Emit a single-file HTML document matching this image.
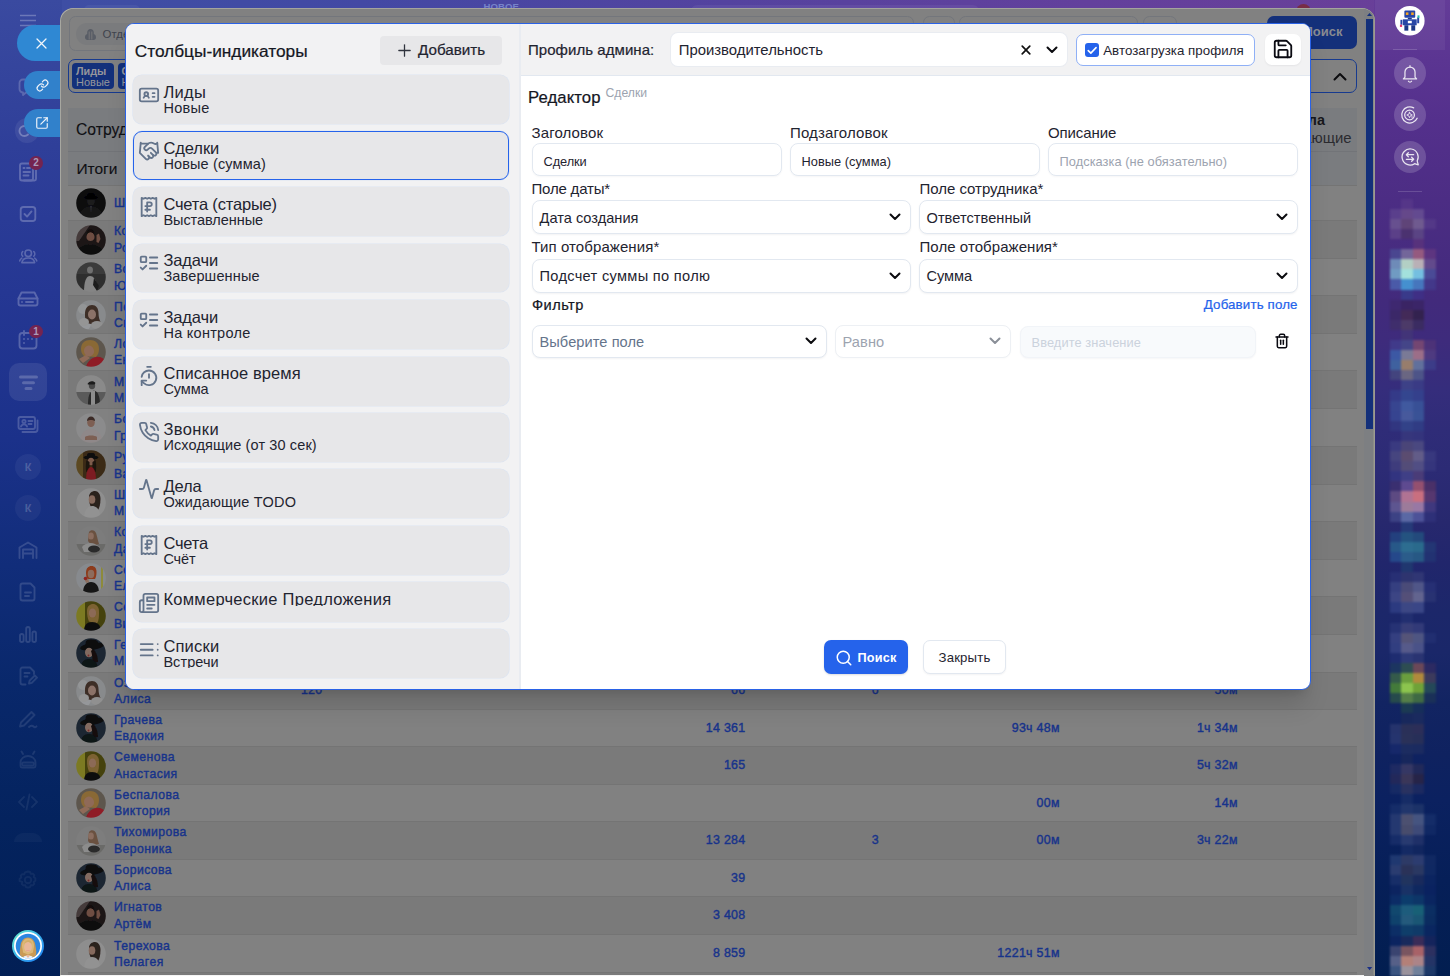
<!DOCTYPE html>
<html lang="ru">
<head>
<meta charset="utf-8">
<title>Столбцы-индикаторы</title>
<style>
*{box-sizing:border-box;margin:0;padding:0}
html,body{width:1450px;height:976px;overflow:hidden}
body{position:relative;font-family:"Liberation Sans",sans-serif;color:#111827;background:#1d3590}
.abs{position:absolute}
svg{display:block;overflow:visible}
/* ---------- page background ---------- */
#bg{left:0;top:0;width:1450px;height:976px;background:linear-gradient(90deg,#3d4fa4 0%,#4349a4 25%,#54439f 50%,#63409c 75%,#6a3f98 100%)}
#lbar{left:0;top:0;width:62px;height:976px;background:linear-gradient(180deg,#3a4aa0 0%,#2f3f99 15%,#253793 30%,#1b318a 45%,#112d7a 58%,#09286b 70%,#04235e 84%,#021f55 100%)}
#rbar{left:1374px;top:0;width:76px;height:976px;background:linear-gradient(180deg,#643c98 0px,#5b3592 60px,#54308c 120px,#4c2d84 200px,#422a7c 300px,#3e2b7c 340px,#352d7c 390px,#2f2c78 430px,#2c2b75 470px,#27286e 522px,#21266c 562px,#1c276a 612px,#1a2769 653px,#122462 703px,#0f2260 754px,#0b2160 800px,#061f58 880px,#021e50 976px)}
/* ---------- left sidebar ---------- */
.lic{position:absolute;left:16px;width:24px;height:24px;color:#fff}
.lic svg{width:24px;height:24px;fill:none;stroke:currentColor;stroke-width:1.7;stroke-linecap:round;stroke-linejoin:round}
.badge{position:absolute;width:13.600px;height:13.600px;border-radius:7px;background:#742450;color:#ab9bba;font-size:10px;line-height:14px;text-align:center;font-weight:700}
.pill{position:absolute;background:#2f88d3;color:#fff}
/* ---------- slider ---------- */
#slider{left:60px;top:8px;width:1314.8px;height:968px;border-radius:13px 13px 0 0;background:#818181;overflow:hidden}
/* ---------- modal ---------- */
#modal{left:125px;top:23px;width:1186px;height:667px;border:1px solid #2a62e6;border-radius:9px;background:#fff;overflow:hidden;box-shadow:0 20px 25px -5px rgba(0,0,0,.13),0 8px 10px -6px rgba(0,0,0,.12)}
#lp{left:0;top:0;width:395px;height:665px;background:#f2f2f3;border-right:2px solid #e9ecf1}
#hd{left:395px;top:0;width:789px;height:52px;background:#f2f2f3;border-bottom:1px solid #e2e8f0}
.med{-webkit-text-stroke:.22px currentColor}
.it{position:absolute;left:6.6px;width:376.8px;height:48.8px;border-radius:9px;background:#e7e7e9;box-shadow:0 0 0 .6px rgba(214,224,240,.8)}
.it.sel{border:1px solid #2563eb}
.it.sel .ic{left:4px;top:8.200px}.it.sel .t{left:29.8px;top:7.5px}.it.sel .s{left:29.8px;top:24.7px}
.it .ic{position:absolute;left:5px;top:8.400px;width:22px;height:22px;color:#64748b}
.it .ic svg{width:22px;height:22px;fill:none;stroke:currentColor;stroke-width:2;stroke-linecap:round;stroke-linejoin:round}
.it .t{position:absolute;left:30.8px;top:8.5px;font-size:16.5px;line-height:17px;color:#1f2430;white-space:nowrap}
.it .s{position:absolute;left:30.8px;top:25.7px;font-size:14.5px;line-height:15px;color:#1f2430;white-space:nowrap}
.lbl{position:absolute;font-size:15px;line-height:16px;color:#1f2430;white-space:nowrap}
.inp{position:absolute;height:33.5px;border:1px solid #e2e8f0;border-radius:8px;background:#fff;box-shadow:0 1px 2px rgba(15,23,42,.05);font-size:12.8px;line-height:31px;padding-left:11px;color:#1f2430;white-space:nowrap}
.sel2{position:absolute;height:34.5px;border:1px solid #e2e8f0;border-radius:8px;background:#fff;box-shadow:0 1px 2px rgba(15,23,42,.05);font-size:14.6px;line-height:32px;padding-left:7.5px;color:#1f2430;white-space:nowrap}
.chev{position:absolute;width:12px;height:8px}
.chev svg{width:12px;height:8px;fill:none;stroke:#0b0b0f;stroke-width:2;stroke-linecap:round;stroke-linejoin:round}
</style>
</head>
<body>
<div id="bg" class="abs"></div>
<div id="lbar" class="abs"></div>
<div id="rbar" class="abs"></div>

<!--LEFTBAR-->
<svg class="abs" style="left:20px;top:13px;width:17px;height:14px;opacity:.26" viewBox="0 0 17 14" stroke="#fff" stroke-width="1.4" fill="none"><path d="M0 2.5h16M0 7.5h16M0 12.5h16"/></svg>
<svg class="abs" style="left:16.3px;top:74.0px;width:24px;height:24px;opacity:0.2" viewBox="0 0 24 24" fill="none" stroke="#fff" stroke-width="1.85" stroke-linecap="round" stroke-linejoin="round"><path d="M9 5.500H7a3.500 3.500 0 0 0-3.500 3.500v6A3.500 3.500 0 0 0 7 18.500v2.500l3-2.500h9"/></svg>
<div class="abs" style="left:14.500px;top:118px;width:24.600px;height:24.600px;border-radius:13px;background:rgba(255,255,255,.07)"></div>
<svg class="abs" style="left:13.0px;top:118.5px;width:24px;height:24px;opacity:0.28" viewBox="0 0 24 24" fill="none" stroke="#fff" stroke-width="1.85" stroke-linecap="round" stroke-linejoin="round"><path d="M15 8.500a5 5 0 1 0 0 7"/></svg>
<svg class="abs" style="left:16.3px;top:160.0px;width:24px;height:24px;opacity:0.24" viewBox="0 0 24 24" fill="none" stroke="#fff" stroke-width="1.85" stroke-linecap="round" stroke-linejoin="round"><rect x="4" y="3.5" width="13" height="17" rx="2"/><path d="M17 8h1.5a1.5 1.5 0 0 1 1.5 1.5V19a1.5 1.5 0 0 1-1.5 1.5H8"/><path d="M7.5 8h1M11 8h3M7.5 12h6.5M7.5 15.5h5"/></svg>
<svg class="abs" style="left:16.3px;top:202.0px;width:24px;height:24px;opacity:0.24" viewBox="0 0 24 24" fill="none" stroke="#fff" stroke-width="1.85" stroke-linecap="round" stroke-linejoin="round"><rect x="4.700" y="5" width="14.600" height="14" rx="2.800"/><path d="M8.500 12l2.600 2.600 4.400-5.200"/></svg>
<svg class="abs" style="left:18.1px;top:246.1px;width:20.5px;height:20.5px;opacity:0.24" viewBox="0 0 24 24" fill="none" stroke="#fff" stroke-width="1.85" stroke-linecap="round" stroke-linejoin="round"><circle cx="12" cy="8.5" r="3.8"/><path d="M4.5 19.5c.6-3.6 3.6-5.5 7.5-5.500s6.900 1.900 7.500 5.500z"/><path d="M5.500 6.500c-1.500 1.500-1.500 4 0 5.500M18.500 6.500c1.500 1.500 1.500 4 0 5.500"/><path d="M2 17.500c.300-1.500 1.200-2.600 2.500-3.300M22 17.500c-.300-1.500-1.200-2.600-2.500-3.300"/></svg>
<svg class="abs" style="left:16.3px;top:286.0px;width:24px;height:24px;opacity:0.24" viewBox="0 0 24 24" fill="none" stroke="#fff" stroke-width="1.85" stroke-linecap="round" stroke-linejoin="round"><path d="M5.500 6.500h13l3 6v5a2 2 0 0 1-2 2h-15a2 2 0 0 1-2-2v-5z"/><path d="M2.500 12.500h19"/><path d="M6 16h.01M10 16h7"/></svg>
<svg class="abs" style="left:16.3px;top:327.5px;width:24px;height:24px;opacity:0.24" viewBox="0 0 24 24" fill="none" stroke="#fff" stroke-width="1.85" stroke-linecap="round" stroke-linejoin="round"><rect x="3.500" y="5" width="17" height="15.500" rx="3"/><path d="M8 3v4M16 3v4"/><path d="M8 11h.01M12 11h.01M16 11h.01M8 15h.01"/></svg>
<div class="abs" style="left:9px;top:363px;width:38px;height:38px;border-radius:10px;background:rgba(255,255,255,.085)"></div>
<svg class="abs" style="left:18px;top:374px;width:21px;height:18px;opacity:.2" viewBox="0 0 21 18" stroke="#fff" stroke-width="3" stroke-linecap="round" fill="none"><path d="M2.500 3h16M5.500 8.700h10M8 14.400h5"/></svg>
<svg class="abs" style="left:16.3px;top:412.0px;width:24px;height:24px;opacity:0.2" viewBox="0 0 24 24" fill="none" stroke="#fff" stroke-width="1.85" stroke-linecap="round" stroke-linejoin="round"><rect x="2.500" y="5" width="16.500" height="12" rx="2"/><path d="M21.500 8.500v9a2.500 2.500 0 0 1-2.500 2.500H6.500"/><circle cx="8" cy="9.500" r="1.600"/><path d="M5 14.500c.500-1.500 1.700-2.200 3-2.200s2.500.700 3 2.200M12.500 9h4M12.500 12h3"/></svg>
<div class="abs" style="left:15px;top:453.5px;width:26px;height:26px;border-radius:13px;background:rgba(255,255,255,0.05);color:rgba(255,255,255,.2);font-size:11px;font-weight:700;line-height:26px;text-align:center">К</div>
<div class="abs" style="left:15px;top:495px;width:26px;height:26px;border-radius:13px;background:rgba(255,255,255,0.045);color:rgba(255,255,255,.2);font-size:11px;font-weight:700;line-height:26px;text-align:center">К</div>
<svg class="abs" style="left:16.3px;top:538.0px;width:24px;height:24px;opacity:0.15" viewBox="0 0 24 24" fill="none" stroke="#fff" stroke-width="1.85" stroke-linecap="round" stroke-linejoin="round"><path d="M3.500 20V9.500L12 4.500l8.500 5V20"/><path d="M7 20v-8.500h10V20"/><path d="M7 15.500h10"/></svg>
<svg class="abs" style="left:16.3px;top:580.0px;width:24px;height:24px;opacity:0.14" viewBox="0 0 24 24" fill="none" stroke="#fff" stroke-width="1.85" stroke-linecap="round" stroke-linejoin="round"><path d="M6.500 3.500h8l4 4v11a2 2 0 0 1-2 2h-10a2 2 0 0 1-2-2v-13a2 2 0 0 1 2-2z"/><path d="M9 12.500h6M9 16h4"/></svg>
<svg class="abs" style="left:16.3px;top:622.0px;width:24px;height:24px;opacity:0.14" viewBox="0 0 24 24" fill="none" stroke="#fff" stroke-width="1.85" stroke-linecap="round" stroke-linejoin="round"><rect x="4" y="12" width="3.600" height="8" rx="1.800"/><rect x="10.200" y="5" width="3.600" height="15" rx="1.800"/><rect x="16.400" y="9.500" width="3.600" height="10.500" rx="1.800"/></svg>
<svg class="abs" style="left:16.3px;top:664.0px;width:24px;height:24px;opacity:0.12" viewBox="0 0 24 24" fill="none" stroke="#fff" stroke-width="1.85" stroke-linecap="round" stroke-linejoin="round"><path d="M18 10V7.500l-4-4h-7.500a2 2 0 0 0-2 2v13a2 2 0 0 0 2 2h3"/><path d="M8.500 9h5M8.500 12.500h3"/><path d="M13 19.500l.600-2.800 5.200-5.200 2.200 2.200-5.200 5.200z"/></svg>
<svg class="abs" style="left:16.3px;top:706.0px;width:24px;height:24px;opacity:0.1" viewBox="0 0 24 24" fill="none" stroke="#fff" stroke-width="1.85" stroke-linecap="round" stroke-linejoin="round"><path d="M5 16.500L15.500 6l3 3L8 19.500l-4 1z"/><path d="M13 21c2-1.500 3.500-1.500 4.500-.500s2 .800 3-.200"/></svg>
<svg class="abs" style="left:16.3px;top:748.0px;width:24px;height:24px;opacity:0.09" viewBox="0 0 24 24" fill="none" stroke="#fff" stroke-width="1.85" stroke-linecap="round" stroke-linejoin="round"><path d="M4.500 18v-3.500a7.500 6.500 0 0 1 15 0V18a1.500 1.500 0 0 1-1.500 1.500H6A1.500 1.500 0 0 1 4.500 18z"/><path d="M7.500 14.500h9a1.500 1.500 0 0 1 0 3h-9a1.500 1.500 0 0 1 0-3z"/><path d="M7 6L5.500 3.500M17 6l1.500-2.500"/></svg>
<svg class="abs" style="left:16.3px;top:790.0px;width:24px;height:24px;opacity:0.07" viewBox="0 0 24 24" fill="none" stroke="#fff" stroke-width="1.85" stroke-linecap="round" stroke-linejoin="round"><path d="M8 7l-5 5 5 5M16 7l5 5-5 5M13.500 4.500l-3 15"/></svg>
<div class="abs" style="left:14px;top:833px;width:28px;height:9px;border-radius:14px 14px 0 0;background:rgba(255,255,255,.035)"></div>
<svg class="abs" style="left:16.3px;top:868.0px;width:24px;height:24px;opacity:0.05" viewBox="0 0 24 24" fill="none" stroke="#fff" stroke-width="1.85" stroke-linecap="round" stroke-linejoin="round"><circle cx="12" cy="12" r="3.200"/><path d="M12 3.500l2 .400.800 2 2-.300 1.500 1.500-.600 2 1.700 1.200v2.400l-1.700 1.200.600 2-1.500 1.500-2-.300-.800 2-2 .400-2-.400-.800-2-2 .300-1.500-1.500.600-2L3.600 13.200v-2.400l1.700-1.200-.600-2 1.500-1.500 2 .300.800-2z"/></svg>
<div class="badge" style="left:29.200px;top:156.300px">2</div>
<div class="badge" style="left:29.200px;top:324.600px">1</div>
<svg class="abs" style="left:12px;top:929.800px;width:32px;height:32px" viewBox="0 0 32 32"><defs><linearGradient id="ug" x1="0" y1="0" x2="1" y2="1"><stop offset="0" stop-color="#6af0c6"/><stop offset=".45" stop-color="#3cb8ec"/><stop offset="1" stop-color="#1b78f2"/></linearGradient><clipPath id="uc"><circle cx="16" cy="16" r="12.300"/></clipPath></defs><circle cx="16" cy="16" r="16" fill="url(#ug)"/><circle cx="16" cy="16" r="14" fill="#fff"/><g clip-path="url(#uc)"><rect width="32" height="32" fill="#2b86e2"/><path d="M8.500 27c-1.500-4-.500-8 0-11 .600-5.500 3.500-8.500 7.500-8.500s6.900 3 7.500 8.500c.500 3 1.500 7 0 11z" fill="#c99a55"/><path d="M10 16c0-5 2.500-7.500 6-7.500s6 2.500 6 7.500c0 2-1 4.500-1 6.500l-5 2-5-2c0-2-1-4.500-1-6.500z" fill="#dcb877"/><ellipse cx="16" cy="17" rx="3.900" ry="5" fill="#e9b89a"/><path d="M12 14.500c.500-3 2.500-4.200 4.500-4.200 1.800 0 3.200 1.200 3.600 3.700-1.500-1.500-3-2-4.500-2s-2.800 1-3.600 2.500z" fill="#d4ad68"/><path d="M14.300 20.200c1 .800 2.400.800 3.400 0-.500 1.200-2.900 1.200-3.400 0z" fill="#d96f7a"/><path d="M9 32c.500-4.500 3-6.500 7-6.500s6.500 2 7 6.500z" fill="#e8eef6"/><path d="M14 25.500l2 2.500 2-2.500-2-.800z" fill="#e9b89a"/></g></svg>
<!--/LEFTBAR-->

<!--RIGHTBAR-->
<div class="abs" style="left:1374.500px;top:0;width:70.500px;height:49.600px;background:rgba(255,255,255,.05)"></div>
<div class="abs" style="left:1393px;top:49px;width:24px;height:1px;background:rgba(255,255,255,.16)"></div>
<svg class="abs" style="left:1394.800px;top:6.300px;width:29.600px;height:29.600px" viewBox="0 0 30 30"><circle cx="15" cy="15" r="15" fill="#fff"/><rect x="9.500" y="4.500" width="11" height="7.500" rx="1" fill="#2746a6"/><rect x="11" y="6.500" width="2.600" height="2.600" fill="#f5a623"/><rect x="16.400" y="6.500" width="2.600" height="2.600" fill="#f5a623"/><rect x="13" y="12" width="4" height="1.500" fill="#1b3787"/><rect x="8" y="13.500" width="14" height="6" fill="#2746a6"/><rect x="13" y="15" width="4" height="2.500" fill="#fff"/><rect x="9.500" y="19.500" width="4" height="5.500" fill="#1b3787"/><rect x="16.500" y="19.500" width="4" height="5.500" fill="#1b3787"/><rect x="5.500" y="14" width="2" height="5" fill="#2746a6"/><rect x="22.500" y="11.500" width="2" height="6" fill="#2746a6"/><rect x="5" y="19" width="2.200" height="2.200" fill="#e8336d"/><rect x="22.800" y="9.500" width="2" height="2.500" fill="#22c1a7"/></svg>
<div class="abs" style="left:1394px;top:57.2px;width:32px;height:32px;border-radius:16px;background:rgba(255,255,255,.17)"></div><svg class="abs" style="left:1399px;top:62.2px;width:22px;height:22px;opacity:.85" viewBox="0 0 24 24" fill="none" stroke="#fff" stroke-width="1.350" stroke-linecap="round" stroke-linejoin="round"><path d="M6.500 16.500V11a5.500 5.500 0 0 1 11 0v5.500l1.700 2H4.800z"/><path d="M10.300 21a2 2 0 0 0 3.400 0"/><path d="M12 4v1.500"/></svg>
<div class="abs" style="left:1394px;top:99.0px;width:32px;height:32px;border-radius:16px;background:rgba(255,255,255,.17)"></div><svg class="abs" style="left:1399px;top:104.0px;width:22px;height:22px;opacity:.85" viewBox="0 0 24 24" fill="none" stroke="#fff" stroke-width="1.350" stroke-linecap="round" stroke-linejoin="round"><circle cx="11.500" cy="12" r="5.300"/><path d="M19.800 15.500A8.800 8.800 0 1 1 16 4.200"/><path d="M11.500 9l.900 2.100 2.100.900-2.100.900-.900 2.100-.900-2.100-2.100-.900 2.100-.900z" stroke-width="1"/><path d="M14.200 14.200h.01" stroke-width="1.600"/></svg>
<div class="abs" style="left:1394px;top:141.0px;width:32px;height:32px;border-radius:16px;background:rgba(255,255,255,.17)"></div><svg class="abs" style="left:1399px;top:146.0px;width:22px;height:22px;opacity:.85" viewBox="0 0 24 24" fill="none" stroke="#fff" stroke-width="1.350" stroke-linecap="round" stroke-linejoin="round"><path d="M21 20.500l-4-1.200a8.800 8.800 0 1 1 2.800-3z"/><path d="M16 9.500H8l2.200-2.200M8 9.500l2.200 2.200M8 14.500h8l-2.200-2.200M16 14.500l-2.200 2.200"/></svg>
<div class="abs" style="left:1398px;top:191.300px;width:24px;height:1px;background:rgba(255,255,255,.16)"></div>
<!--PIX-->
<div class="abs" style="left:1390.2px;top:198.7px;width:46.2px;height:777.3px;filter:blur(1px)">
<div style="height:10.1px;background:linear-gradient(90deg,transparent 25%,#553688 0 50%,transparent 0 75%,transparent 0)"></div>
<div style="height:10.1px;background:linear-gradient(90deg,#5a3f8c 25%,#65488a 0 50%,#634a90 0 75%,transparent 0)"></div>
<div style="height:10.1px;background:linear-gradient(90deg,#67508f 25%,#5f4478 0 50%,#6f5a8f 0 75%,#533887 0)"></div>
<div style="height:10.1px;background:linear-gradient(90deg,#5b4088 25%,#4b3270 0 50%,#5a4484 0 75%,transparent 0)"></div>
<div style="height:10.1px;background:linear-gradient(90deg,transparent 25%,transparent 0 50%,#57327c 0 75%,transparent 0)"></div>
<div style="height:10.1px;background:linear-gradient(90deg,#4a4690 25%,#73669a 0 50%,#955a7f 0 75%,#5d3580 0)"></div>
<div style="height:10.1px;background:linear-gradient(90deg,#6e8bb8 25%,#b3cfc4 0 50%,#b9b0b6 0 75%,#624a8c 0)"></div>
<div style="height:10.1px;background:linear-gradient(90deg,#709bc2 25%,#a3e1dc 0 50%,#74bfe0 0 75%,#4a4a96 0)"></div>
<div style="height:10.1px;background:linear-gradient(90deg,#4a5aa8 25%,#4590cf 0 50%,#4676bd 0 75%,#43388a 0)"></div>
<div style="height:10.1px;background:linear-gradient(90deg,transparent 25%,#393a8a 0 50%,#3f2f85 0 75%,transparent 0)"></div>
<div style="height:10.1px;background:linear-gradient(90deg,#3e2870 25%,#3a2464 0 50%,#3b2568 0 75%,transparent 0)"></div>
<div style="height:10.1px;background:linear-gradient(90deg,#3b2868 25%,#432a58 0 50%,#33224f 0 75%,transparent 0)"></div>
<div style="height:10.1px;background:linear-gradient(90deg,#3f2e6c 25%,#4c3a68 0 50%,#3b2c62 0 75%,transparent 0)"></div>
<div style="height:10.1px;background:linear-gradient(90deg,transparent 25%,#423478 0 50%,transparent 0 75%,transparent 0)"></div>
<div style="height:10.1px;background:linear-gradient(90deg,#403a8a 25%,#444588 0 50%,#744672 0 75%,#4c3278 0)"></div>
<div style="height:10.1px;background:linear-gradient(90deg,#3c58a4 25%,#7a7a96 0 50%,#9c6e88 0 75%,#4e3a80 0)"></div>
<div style="height:10.1px;background:linear-gradient(90deg,#3f619f 25%,#977d6c 0 50%,#61709c 0 75%,#3c3c88 0)"></div>
<div style="height:10.1px;background:linear-gradient(90deg,#43447e 25%,#6a6682 0 50%,#4d5488 0 75%,transparent 0)"></div>
<div style="height:10.1px;background:linear-gradient(90deg,transparent 25%,#3d4187 0 50%,#3a3b85 0 75%,transparent 0)"></div>
<div style="height:10.1px;background:linear-gradient(90deg,#343a88 25%,#34468f 0 50%,#34408c 0 75%,transparent 0)"></div>
<div style="height:10.1px;background:linear-gradient(90deg,#374590 25%,#40599f 0 50%,#385096 0 75%,transparent 0)"></div>
<div style="height:10.1px;background:linear-gradient(90deg,#364490 25%,#47599c 0 50%,#395296 0 75%,transparent 0)"></div>
<div style="height:10.1px;background:linear-gradient(90deg,#313680 25%,#324288 0 50%,#303c84 0 75%,transparent 0)"></div>
<div style="height:10.1px;background:linear-gradient(90deg,transparent 25%,#36367c 0 50%,#34347c 0 75%,transparent 0)"></div>
<div style="height:10.1px;background:linear-gradient(90deg,#3a3a80 25%,#4a4578 0 50%,#4a4880 0 75%,transparent 0)"></div>
<div style="height:10.1px;background:linear-gradient(90deg,#46457f 25%,#5b4c70 0 50%,#625c88 0 75%,#38387e 0)"></div>
<div style="height:10.1px;background:linear-gradient(90deg,#3e3c7c 25%,#534c78 0 50%,#514e84 0 75%,#35357c 0)"></div>
<div style="height:10.1px;background:linear-gradient(90deg,#323480 25%,#3f3f86 0 50%,#4a3c78 0 75%,transparent 0)"></div>
<div style="height:10.1px;background:linear-gradient(90deg,#3a2f70 25%,#5e4a90 0 50%,#94506f 0 75%,#4a3068 0)"></div>
<div style="height:10.1px;background:linear-gradient(90deg,#5d4a82 25%,#b07393 0 50%,#c96f7f 0 75%,#56376f 0)"></div>
<div style="height:10.1px;background:linear-gradient(90deg,#5d5590 25%,#9c7b9a 0 50%,#9878a4 0 75%,#3f387e 0)"></div>
<div style="height:10.1px;background:linear-gradient(90deg,#3c4284 25%,#5a68a4 0 50%,#4d5298 0 75%,#2e3078 0)"></div>
<div style="height:10.1px;background:linear-gradient(90deg,transparent 25%,#263a78 0 50%,transparent 0 75%,transparent 0)"></div>
<div style="height:10.1px;background:linear-gradient(90deg,#23407e 25%,#245380 0 50%,#234a7c 0 75%,transparent 0)"></div>
<div style="height:10.1px;background:linear-gradient(90deg,#275888 25%,#2d6d90 0 50%,#2a6a8c 0 75%,#233674 0)"></div>
<div style="height:10.1px;background:linear-gradient(90deg,#25488a 25%,#2b5c8a 0 50%,#275884 0 75%,#223272 0)"></div>
<div style="height:10.1px;background:linear-gradient(90deg,transparent 25%,#20376f 0 50%,transparent 0 75%,transparent 0)"></div>
<div style="height:10.1px;background:linear-gradient(90deg,#272f74 25%,#2e346f 0 50%,#303674 0 75%,transparent 0)"></div>
<div style="height:10.1px;background:linear-gradient(90deg,#353f80 25%,#4a4b78 0 50%,#505688 0 75%,#262f74 0)"></div>
<div style="height:10.1px;background:linear-gradient(90deg,#3c4584 25%,#544f78 0 50%,#62648f 0 75%,#283272 0)"></div>
<div style="height:10.1px;background:linear-gradient(90deg,#2c3a80 25%,#3c4784 0 50%,#3a4686 0 75%,transparent 0)"></div>
<div style="height:10.1px;background:linear-gradient(90deg,transparent 25%,#222f70 0 50%,transparent 0 75%,transparent 0)"></div>
<div style="height:10.1px;background:linear-gradient(90deg,#263274 25%,#383e78 0 50%,#323a78 0 75%,transparent 0)"></div>
<div style="height:10.1px;background:linear-gradient(90deg,#343f80 25%,#555478 0 50%,#4e5582 0 75%,#212e70 0)"></div>
<div style="height:10.1px;background:linear-gradient(90deg,#313e80 25%,#565a8a 0 50%,#4a5288 0 75%,transparent 0)"></div>
<div style="height:10.1px;background:linear-gradient(90deg,#1e2c70 25%,#2e3a78 0 50%,#2a3472 0 75%,transparent 0)"></div>
<div style="height:10.1px;background:linear-gradient(90deg,#1c3560 25%,#2d4d52 0 50%,#6b4858 0 75%,#2c2a62 0)"></div>
<div style="height:10.1px;background:linear-gradient(90deg,#345a4a 25%,#6a9e3e 0 50%,#b08a3c 0 75%,#3c3a5c 0)"></div>
<div style="height:10.1px;background:linear-gradient(90deg,#437a3a 25%,#8cc44e 0 50%,#6fa238 0 75%,#244858 0)"></div>
<div style="height:10.1px;background:linear-gradient(90deg,#264a4c 25%,#547e48 0 50%,#3f6a44 0 75%,#1a3058 0)"></div>
<div style="height:10.1px;background:linear-gradient(90deg,transparent 25%,#1b3a52 0 50%,#162e5a 0 75%,transparent 0)"></div>
<div style="height:10.1px;background:linear-gradient(90deg,transparent 25%,#18285c 0 50%,#1a2a5e 0 75%,transparent 0)"></div>
<div style="height:10.1px;background:linear-gradient(90deg,#25336c 25%,#2a3058 0 50%,#2c2e58 0 75%,transparent 0)"></div>
<div style="height:10.1px;background:linear-gradient(90deg,#25346e 25%,#2a3158 0 50%,#272f58 0 75%,transparent 0)"></div>
<div style="height:10.1px;background:linear-gradient(90deg,#16286a 25%,#1c2c60 0 50%,#1b2b60 0 75%,transparent 0)"></div>
<div style="height:10.1px;background:linear-gradient(90deg,transparent 25%,#17275c 0 50%,transparent 0 75%,transparent 0)"></div>
<div style="height:10.1px;background:linear-gradient(90deg,#1e2a62 25%,#353764 0 50%,#212959 0 75%,transparent 0)"></div>
<div style="height:10.1px;background:linear-gradient(90deg,#22285a 25%,#3a3658 0 50%,#262448 0 75%,transparent 0)"></div>
<div style="height:10.1px;background:linear-gradient(90deg,#162a64 25%,#293260 0 50%,#1c2a60 0 75%,transparent 0)"></div>
<div style="height:10.1px;background:linear-gradient(90deg,transparent 25%,#162c66 0 50%,transparent 0 75%,transparent 0)"></div>
<div style="height:10.1px;background:linear-gradient(90deg,#152c68 25%,#21366c 0 50%,#1c3268 0 75%,transparent 0)"></div>
<div style="height:10.1px;background:linear-gradient(90deg,#243870 25%,#4c5070 0 50%,#455480 0 75%,#142c68 0)"></div>
<div style="height:10.1px;background:linear-gradient(90deg,#243870 25%,#484c6c 0 50%,#3e4a78 0 75%,#102864 0)"></div>
<div style="height:10.1px;background:linear-gradient(90deg,#162c68 25%,#283a70 0 50%,#1f3068 0 75%,transparent 0)"></div>
<div style="height:10.1px;background:linear-gradient(90deg,transparent 25%,#142a64 0 50%,#11265f 0 75%,transparent 0)"></div>
<div style="height:10.1px;background:linear-gradient(90deg,#1f3870 25%,#2d3a66 0 50%,#2c3c70 0 75%,#102862 0)"></div>
<div style="height:10.1px;background:linear-gradient(90deg,#2a3c70 25%,#2a3258 0 50%,#2a3862 0 75%,#0f2862 0)"></div>
<div style="height:10.1px;background:linear-gradient(90deg,#172e68 25%,#21345e 0 50%,#192a5c 0 75%,#0b2460 0)"></div>
<div style="height:10.1px;background:linear-gradient(90deg,#0c2460 25%,#193266 0 50%,#0f285f 0 75%,#0a2260 0)"></div>
<div style="height:10.1px;background:linear-gradient(90deg,#0c2c66 25%,#0c3c6c 0 50%,#0d3668 0 75%,#0a2560 0)"></div>
<div style="height:10.1px;background:linear-gradient(90deg,#11486e 25%,#1d5c7c 0 50%,#186076 0 75%,#0b2e62 0)"></div>
<div style="height:10.1px;background:linear-gradient(90deg,#0f426c 25%,#245a7c 0 50%,#1a5674 0 75%,#0b2c60 0)"></div>
<div style="height:10.1px;background:linear-gradient(90deg,#0c2e66 25%,#0f3e6a 0 50%,#0f3a68 0 75%,#0a2660 0)"></div>
<div style="height:10.1px;background:linear-gradient(90deg,#0b2460 25%,#182a5c 0 50%,#3a2c58 0 75%,#14245c 0)"></div>
<div style="height:10.1px;background:linear-gradient(90deg,#3a4470 25%,#7a5560 0 50%,#a86268 0 75%,#2c3060 0)"></div>
<div style="height:10.1px;background:linear-gradient(90deg,#566088 25%,#b48078 0 50%,#ac8488 0 75%,#243466 0)"></div>
<div style="height:10.1px;background:linear-gradient(90deg,#3a5480 25%,#9a929c 0 50%,#70809a 0 75%,#1c3868 0)"></div>
</div>
<!--/PIX-->
<!--/RIGHTBAR-->

<!--TOPSTRIP-->
<div class="abs" style="left:84px;top:5px;width:56px;height:10px;border-radius:5px;background:rgba(255,255,255,.05)"></div>
<div class="abs" style="left:691px;top:4.500px;width:288px;height:12px;border-radius:6px;background:rgba(255,255,255,.055)"></div>
<div class="abs" style="left:483.500px;top:1.200px;font-size:9.600px;line-height:11px;font-weight:700;color:rgba(160,185,235,.55);letter-spacing:.1px">НОВОЕ</div>
<div class="abs" style="left:1295.600px;top:4px;width:15px;height:15px;border-radius:8px;background:#782d46"></div>
<!--/TOPSTRIP-->
<div id="slider" class="abs">
<!--SLIDER-->
<svg width="0" height="0" style="position:absolute"><defs><clipPath id="avc"><circle cx="15" cy="15" r="14.800"/></clipPath><filter id="avb" x="-10%" y="-10%" width="120%" height="120%"><feGaussianBlur stdDeviation=".75"/></filter></defs></svg>
<div class="abs" style="left:8.5px;top:8.0px;width:845.0px;height:34.5px;border:1px solid #73767c;border-radius:6.500px;"></div>
<div class="abs" style="left:862.5px;top:8.0px;width:32.0px;height:34.5px;border:1px solid #73767c;border-radius:6.500px;"></div>
<div class="abs" style="left:899.3px;top:8.0px;width:179.2px;height:34.5px;border:1px solid #73767c;border-radius:6.500px;"></div>
<div class="abs" style="left:1083.3px;top:8.0px;width:33.3px;height:34.5px;border:1px solid #73767c;border-radius:6.500px;"></div>
<div class="abs" style="left:16.4px;top:14.6px;width:153.6px;height:22.4px;border-radius:11.2px;background:#7a7b7d"></div>
<svg class="abs" style="left:24px;top:19.5px;width:13px;height:13px" viewBox="0 0 13 13"><path d="M1 9.500c0-2 1-3 2.200-3.400V4.500C3.200 2.500 4.700 1 6.500 1s3.300 1.500 3.300 3.500v1.600C11 6.500 12 7.500 12 9.500c0 1.500-1 2.500-2.500 2.500h-6C2 12 1 11 1 9.500z" fill="#595d66"/><path d="M5.200 3.500v8M7.800 3.500v8" stroke="#7a7b7d" stroke-width=".9"/></svg>
<div class="abs" style="left:42.6px;top:18.9px;font-size:11.4px;line-height:14px;color:#3f434d;white-space:nowrap;">Отделы</div>
<div class="abs" style="left:1207.0px;top:8.0px;width:89.7px;height:32.6px;border-radius:7px;background:#14307a"></div>
<div class="abs" style="right:32.3px;top:15.9px;font-size:13px;line-height:16px;color:#888a90;white-space:nowrap;font-weight:700;">Поиск</div>
<div class="abs" style="left:8.0px;top:50.8px;width:1288.8px;height:33.8px;border:1px solid #173a8f;border-radius:7px;"></div>
<div class="abs" style="left:12.0px;top:55.0px;width:41.8px;height:25.8px;border-radius:4px;background:#13307b"></div>
<div class="abs" style="left:16.0px;top:57.1px;font-size:10.8px;line-height:12px;color:#95969c;white-space:nowrap;font-weight:700;">Лиды</div>
<div class="abs" style="left:16.0px;top:67.8px;font-size:11px;line-height:12px;color:#95969c;white-space:nowrap;">Новые</div>
<div class="abs" style="left:58.0px;top:55.0px;width:52.0px;height:25.8px;border-radius:4px;background:#13307b"></div>
<div class="abs" style="left:61.5px;top:57.1px;font-size:10.6px;line-height:12px;color:#95969c;white-space:nowrap;font-weight:700;">Сделки</div>
<div class="abs" style="left:61.5px;top:67.8px;font-size:11px;line-height:12px;color:#95969c;white-space:nowrap;">Новые</div>
<svg class="abs" style="left:1273.2px;top:63.9px;width:14px;height:9px" viewBox="0 0 14 9" fill="none" stroke="#0c0c0f" stroke-width="2" stroke-linecap="round" stroke-linejoin="round"><path d="M1.500 7.500 7 2l5.500 5.500"/></svg>
<div class="abs" style="left:8.2px;top:100.0px;width:1289.0px;height:43.3px;background:#7a7c7f"></div>
<div class="abs" style="left:16.0px;top:111.8px;font-size:15.7px;line-height:20px;color:#101014;white-space:nowrap;-webkit-text-stroke:.12px #101014;">Сотрудник</div>
<div class="abs" style="right:49.8px;top:103.3px;font-size:14.4px;line-height:18px;color:#17171b;white-space:nowrap;font-weight:700;">Дела</div>
<div class="abs" style="right:23.2px;top:121.3px;font-size:14.9px;line-height:19px;color:#2b2b30;white-space:nowrap;">Ожидающие</div>
<div class="abs" style="left:8.2px;top:143.3px;width:1289.0px;height:34.0px;background:#7a7c7f;border-top:1px solid #727478"></div>
<div class="abs" style="left:16.4px;top:151.1px;font-size:15.5px;line-height:19px;color:#101014;white-space:nowrap;-webkit-text-stroke:.12px #101014;">Итоги</div>
<div class="abs" style="left:8.2px;top:177.3px;width:1289.0px;height:34.9px;background:#818181;border-top:1px solid #747474"></div>
<svg class="abs" style="left:15.8px;top:180.2px;width:30px;height:30px" viewBox="0 0 30 30"><g clip-path="url(#avc)"><g filter="url(#avb)"><rect width="30" height="30" fill="#0c0c0e"/><ellipse cx="15" cy="27" rx="11" ry="9" fill="#141416"/><ellipse cx="15" cy="13" rx="4" ry="4.500" fill="#1a1a1d"/><ellipse cx="15" cy="9.500" rx="7" ry="2" fill="#050506"/><rect x="11" y="5" width="8" height="4.500" rx="2" fill="#050506"/><path d="M14 18l1 8 1-8z" fill="#2b2b2f"/></g></g></svg>
<div class="abs" style="left:54.0px;top:187.9px;font-size:12.2px;line-height:15px;color:#17338b;white-space:nowrap;-webkit-text-stroke:.4px #17338b;letter-spacing:.45px;">Шевцов</div>
<div class="abs" style="left:8.2px;top:212.2px;width:1289.0px;height:38.1px;background:#7a7a7a;border-top:1px solid #747474"></div>
<svg class="abs" style="left:15.8px;top:216.8px;width:30px;height:30px" viewBox="0 0 30 30"><g clip-path="url(#avc)"><g filter="url(#avb)"><rect width="30" height="30" fill="#1b1617"/><path d="M0 0h14L3 16H0z" fill="#453b3b"/><ellipse cx="14" cy="28" rx="13" ry="8.500" fill="#0e0b0c"/><ellipse cx="14.500" cy="12" rx="4" ry="5.200" fill="#6e4e43"/><path d="M10.300 10.800c0-4.500 2-6.800 4.200-6.800s4.200 2.300 4.200 6.800c-1-2.500-2.500-3.500-4.200-3.500s-3.200 1-4.200 3.500z" fill="#120e0e"/><path d="M10.600 13.500c0 4.200 1.700 6.800 3.900 6.800s3.900-2.600 3.900-6.800c-1 1.800-2.300 2.500-3.900 2.500s-2.900-.700-3.900-2.500z" fill="#1c1413"/><path d="M20.500 10l2.500-1.500 1.500 5.500-2 4-2-1z" fill="#6e4e43"/></g></g></svg>
<div class="abs" style="left:54.0px;top:215.3px;font-size:12.2px;line-height:16px;color:#17338b;white-space:nowrap;-webkit-text-stroke:.4px #17338b;letter-spacing:.45px;">Козлов</div>
<div class="abs" style="left:54.0px;top:231.6px;font-size:12.2px;line-height:16px;color:#17338b;white-space:nowrap;-webkit-text-stroke:.4px #17338b;letter-spacing:.45px;">Роман</div>
<div class="abs" style="left:8.2px;top:250.3px;width:1289.0px;height:37.1px;background:#818181;border-top:1px solid #747474"></div>
<svg class="abs" style="left:15.8px;top:254.4px;width:30px;height:30px" viewBox="0 0 30 30"><g clip-path="url(#avc)"><g filter="url(#avb)"><rect width="30" height="30" fill="#2f2f2f"/><rect x="0" y="0" width="30" height="12" fill="#3b3b3b"/><ellipse cx="14" cy="8" rx="3" ry="3.600" fill="#6f6f6f"/><path d="M8 30c0-10 2-16 6-16s7 4 7 16z" fill="#858585"/><path d="M18 16l5 8-2 5-4-6z" fill="#1e1e1e"/></g></g></svg>
<div class="abs" style="left:54.0px;top:253.4px;font-size:12.2px;line-height:16px;color:#17338b;white-space:nowrap;-webkit-text-stroke:.4px #17338b;letter-spacing:.45px;">Воронин</div>
<div class="abs" style="left:54.0px;top:269.7px;font-size:12.2px;line-height:16px;color:#17338b;white-space:nowrap;-webkit-text-stroke:.4px #17338b;letter-spacing:.45px;">Юрий</div>
<div class="abs" style="left:8.2px;top:287.4px;width:1289.0px;height:37.6px;background:#7a7a7a;border-top:1px solid #747474"></div>
<svg class="abs" style="left:15.8px;top:291.7px;width:30px;height:30px" viewBox="0 0 30 30"><g clip-path="url(#avc)"><g filter="url(#avb)"><rect width="30" height="30" fill="#888a8c"/><circle cx="7" cy="9" r="5" fill="#939596"/><circle cx="9" cy="24" r="6" fill="#95979a"/><path d="M9 14c0-6 3-9 7-9s6.500 3 6.500 8c0 4 1 7 2 9l-5 3-9-2c-1.500-3-1.500-6-1.500-9z" fill="#3e2e27"/><ellipse cx="16" cy="14.500" rx="4" ry="5" fill="#8b7268"/><ellipse cx="8" cy="22" rx="5" ry="4" fill="#959595"/><ellipse cx="21" cy="25" rx="6" ry="4" fill="#909090"/></g></g></svg>
<div class="abs" style="left:54.0px;top:290.5px;font-size:12.2px;line-height:16px;color:#17338b;white-space:nowrap;-webkit-text-stroke:.4px #17338b;letter-spacing:.45px;">Попова</div>
<div class="abs" style="left:54.0px;top:306.8px;font-size:12.2px;line-height:16px;color:#17338b;white-space:nowrap;-webkit-text-stroke:.4px #17338b;letter-spacing:.45px;">Светлана</div>
<div class="abs" style="left:8.2px;top:325.0px;width:1289.0px;height:37.4px;background:#818181;border-top:1px solid #747474"></div>
<svg class="abs" style="left:15.8px;top:329.2px;width:30px;height:30px" viewBox="0 0 30 30"><g clip-path="url(#avc)"><g filter="url(#avb)"><rect width="30" height="30" fill="#5d574d"/><path d="M5 12c0-6 4-9 9-9s9 3 9 9c0 3-1 6-3 8l-12-1c-2-2-3-4-3-7z" fill="#8a6936"/><ellipse cx="13" cy="14" rx="5" ry="5.500" fill="#8f6b59" transform="rotate(-15 13 14)"/><path d="M10 30c1-5 5-9 10-10s10 3 10 6v4z" fill="#8f1a25"/><path d="M3 22l7-4 4 3-7 5z" fill="#8f6b59"/></g></g></svg>
<div class="abs" style="left:54.0px;top:328.1px;font-size:12.2px;line-height:16px;color:#17338b;white-space:nowrap;-webkit-text-stroke:.4px #17338b;letter-spacing:.45px;">Логинова</div>
<div class="abs" style="left:54.0px;top:344.4px;font-size:12.2px;line-height:16px;color:#17338b;white-space:nowrap;-webkit-text-stroke:.4px #17338b;letter-spacing:.45px;">Екатерина</div>
<div class="abs" style="left:8.2px;top:362.4px;width:1289.0px;height:37.9px;background:#7a7a7a;border-top:1px solid #747474"></div>
<svg class="abs" style="left:15.8px;top:366.9px;width:30px;height:30px" viewBox="0 0 30 30"><g clip-path="url(#avc)"><g filter="url(#avb)"><rect width="30" height="30" fill="#8a8a8a"/><rect y="17" width="30" height="13" fill="#5a5a5a"/><path d="M12 30c0-8 1-13 5-14s7 4 7 14z" fill="#2a2a2a"/><ellipse cx="16" cy="10.500" rx="3.200" ry="3.800" fill="#4a4a4a"/><path d="M11.500 9c1-3 6-4 8-1l-1 1.500h-6.500z" fill="#1c1c1c"/><path d="M15 16h4v14h-4z" fill="#8d8d8d"/></g></g></svg>
<div class="abs" style="left:54.0px;top:365.5px;font-size:12.2px;line-height:16px;color:#17338b;white-space:nowrap;-webkit-text-stroke:.4px #17338b;letter-spacing:.45px;">Морозов</div>
<div class="abs" style="left:54.0px;top:381.8px;font-size:12.2px;line-height:16px;color:#17338b;white-space:nowrap;-webkit-text-stroke:.4px #17338b;letter-spacing:.45px;">Михаил</div>
<div class="abs" style="left:8.2px;top:400.3px;width:1289.0px;height:37.9px;background:#818181;border-top:1px solid #747474"></div>
<svg class="abs" style="left:15.8px;top:404.8px;width:30px;height:30px" viewBox="0 0 30 30"><g clip-path="url(#avc)"><g filter="url(#avb)"><rect width="30" height="30" fill="#8b8b8c"/><ellipse cx="15" cy="9.500" rx="3.800" ry="4.600" fill="#7d5e52"/><path d="M11 8c0-3 2-4.500 4-4.500s4 1.500 4 4.500c-2-1.500-6-1.500-8 0z" fill="#3a2c26"/><path d="M4 30c0-9 4-14 11-14s11 5 11 14z" fill="#8f8889"/><path d="M9 24c2-2 10-2 12 0v3H9z" fill="#7d5e52"/></g></g></svg>
<div class="abs" style="left:54.0px;top:403.4px;font-size:12.2px;line-height:16px;color:#17338b;white-space:nowrap;-webkit-text-stroke:.4px #17338b;letter-spacing:.45px;">Богданов</div>
<div class="abs" style="left:54.0px;top:419.7px;font-size:12.2px;line-height:16px;color:#17338b;white-space:nowrap;-webkit-text-stroke:.4px #17338b;letter-spacing:.45px;">Григорий</div>
<div class="abs" style="left:8.2px;top:438.2px;width:1289.0px;height:37.5px;background:#7a7a7a;border-top:1px solid #747474"></div>
<svg class="abs" style="left:15.8px;top:442.4px;width:30px;height:30px" viewBox="0 0 30 30"><g clip-path="url(#avc)"><g filter="url(#avb)"><rect width="30" height="30" fill="#3b2c16"/><rect x="0" width="7" height="30" fill="#5c4a22"/><ellipse cx="15" cy="7.500" rx="7.500" ry="2.200" fill="#0d0c0c"/><rect x="11" y="3" width="8" height="4.500" rx="2" fill="#0d0c0c"/><ellipse cx="15" cy="11.500" rx="3.200" ry="3.800" fill="#7d5b4c"/><path d="M10.500 10c-1 5-1 9 0 12l3-1v-9zM19.500 10c1 5 1 9 0 12l-3-1v-9z" fill="#1a1210"/><path d="M10 30c0-8 2-13 5-13s5 5 5 13z" fill="#7c1a20"/></g></g></svg>
<div class="abs" style="left:54.0px;top:441.3px;font-size:12.2px;line-height:16px;color:#17338b;white-space:nowrap;-webkit-text-stroke:.4px #17338b;letter-spacing:.45px;">Руднева</div>
<div class="abs" style="left:54.0px;top:457.6px;font-size:12.2px;line-height:16px;color:#17338b;white-space:nowrap;-webkit-text-stroke:.4px #17338b;letter-spacing:.45px;">Валерия</div>
<div class="abs" style="left:8.2px;top:475.7px;width:1289.0px;height:37.5px;background:#818181;border-top:1px solid #747474"></div>
<svg class="abs" style="left:15.8px;top:480.0px;width:30px;height:30px" viewBox="0 0 30 30"><g clip-path="url(#avc)"><g filter="url(#avb)"><rect width="30" height="30" fill="#8e8e8e"/><path d="M13 9c0-4 3-6 6-6s5.500 3 5.500 8c0 5-1 9-3 12l-6-3c-2-3-2.500-7-2.500-11z" fill="#2c211d"/><ellipse cx="16" cy="11.500" rx="3.300" ry="4.300" fill="#866a5d"/><path d="M8 30c0-7 3-12 8-12s8 4 9 12z" fill="#929292"/></g></g></svg>
<div class="abs" style="left:54.0px;top:478.8px;font-size:12.2px;line-height:16px;color:#17338b;white-space:nowrap;-webkit-text-stroke:.4px #17338b;letter-spacing:.45px;">Шилова</div>
<div class="abs" style="left:54.0px;top:495.1px;font-size:12.2px;line-height:16px;color:#17338b;white-space:nowrap;-webkit-text-stroke:.4px #17338b;letter-spacing:.45px;">Марина</div>
<div class="abs" style="left:8.2px;top:513.2px;width:1289.0px;height:37.6px;background:#7a7a7a;border-top:1px solid #747474"></div>
<svg class="abs" style="left:15.8px;top:517.5px;width:30px;height:30px" viewBox="0 0 30 30"><g clip-path="url(#avc)"><g filter="url(#avb)"><rect width="30" height="30" fill="#7b7b7b"/><rect y="18" width="30" height="12" fill="#6b6a68"/><path d="M13 6c2-3 6-2 7 1s2 8 3 11l-7 2-4-5z" fill="#6b5141"/><ellipse cx="15" cy="10" rx="2.800" ry="3.500" fill="#8a6d5f"/><path d="M6 21c3-4 9-5 13-3l5 3-2 5H8z" fill="#8c8c8c"/><ellipse cx="18" cy="23" rx="6" ry="3.500" fill="#2b2b2b"/></g></g></svg>
<div class="abs" style="left:54.0px;top:516.3px;font-size:12.2px;line-height:16px;color:#17338b;white-space:nowrap;-webkit-text-stroke:.4px #17338b;letter-spacing:.45px;">Котова</div>
<div class="abs" style="left:54.0px;top:532.6px;font-size:12.2px;line-height:16px;color:#17338b;white-space:nowrap;-webkit-text-stroke:.4px #17338b;letter-spacing:.45px;">Дарья</div>
<div class="abs" style="left:8.2px;top:550.8px;width:1289.0px;height:37.5px;background:#818181;border-top:1px solid #747474"></div>
<svg class="abs" style="left:15.8px;top:555.0px;width:30px;height:30px" viewBox="0 0 30 30"><g clip-path="url(#avc)"><g filter="url(#avb)"><rect width="30" height="30" fill="#878a8e"/><rect x="25" width="2" height="30" fill="#8d8a3a"/><path d="M10 10c0-5 2.500-7 5.500-7s5 2 5 6c0 3-.500 5-1.500 7h-8c-.700-2-1-4-1-6z" fill="#8c3b1b"/><ellipse cx="15" cy="11" rx="3.300" ry="4.200" fill="#8d6c5c"/><path d="M7 30c0-7 3-11 8-11s8 4 8 11z" fill="#161616"/><path d="M9 17l3-2 1 4-3 1z" fill="#8d6c5c"/><circle cx="9.500" cy="15.500" r="1.800" fill="#8e2420"/></g></g></svg>
<div class="abs" style="left:54.0px;top:553.9px;font-size:12.2px;line-height:16px;color:#17338b;white-space:nowrap;-webkit-text-stroke:.4px #17338b;letter-spacing:.45px;">Серова</div>
<div class="abs" style="left:54.0px;top:570.2px;font-size:12.2px;line-height:16px;color:#17338b;white-space:nowrap;-webkit-text-stroke:.4px #17338b;letter-spacing:.45px;">Елена</div>
<div class="abs" style="left:8.2px;top:588.3px;width:1289.0px;height:37.5px;background:#7a7a7a;border-top:1px solid #747474"></div>
<svg class="abs" style="left:15.8px;top:592.5px;width:30px;height:30px" viewBox="0 0 30 30"><g clip-path="url(#avc)"><g filter="url(#avb)"><rect width="30" height="30" fill="#45420f"/><rect width="9" height="30" fill="#7b7a22"/><path d="M11 10c0-5 3-7 6-7s6 2.500 6 7.500c0 5 0 9-2 12l-8-2c-1.500-3-2-7-2-10.500z" fill="#7c6232"/><ellipse cx="16.500" cy="12" rx="3.600" ry="4.600" fill="#8c6b57"/><path d="M8 30c0-6 3-9 8-9s9 3 9 9z" fill="#0f0f10"/></g></g></svg>
<div class="abs" style="left:54.0px;top:591.4px;font-size:12.2px;line-height:16px;color:#17338b;white-space:nowrap;-webkit-text-stroke:.4px #17338b;letter-spacing:.45px;">Сергеева</div>
<div class="abs" style="left:54.0px;top:607.7px;font-size:12.2px;line-height:16px;color:#17338b;white-space:nowrap;-webkit-text-stroke:.4px #17338b;letter-spacing:.45px;">Виктория</div>
<div class="abs" style="left:8.2px;top:625.8px;width:1289.0px;height:37.7px;background:#818181;border-top:1px solid #747474"></div>
<svg class="abs" style="left:15.8px;top:630.1px;width:30px;height:30px" viewBox="0 0 30 30"><g clip-path="url(#avc)"><g filter="url(#avb)"><rect width="30" height="30" fill="#1d2732"/><ellipse cx="16" cy="8.500" rx="12" ry="3.500" fill="#0a0b0d" transform="rotate(-8 16 8.500)"/><path d="M10 3c3-2 10-2 12 1l1 5H9z" fill="#0a0b0d"/><ellipse cx="13" cy="14.500" rx="4" ry="4.800" fill="#826a60"/><path d="M17 11c3 2 5 7 5 13l-6 1c1-4 0-9-1-12z" fill="#15100f"/><path d="M5 30c0-6 3-9 8-9s8 3 9 9z" fill="#0e1217"/><circle cx="12.500" cy="17.500" r=".9" fill="#7d2a2a"/></g></g></svg>
<div class="abs" style="left:54.0px;top:628.9px;font-size:12.2px;line-height:16px;color:#17338b;white-space:nowrap;-webkit-text-stroke:.4px #17338b;letter-spacing:.45px;">Герасимова</div>
<div class="abs" style="left:54.0px;top:645.2px;font-size:12.2px;line-height:16px;color:#17338b;white-space:nowrap;-webkit-text-stroke:.4px #17338b;letter-spacing:.45px;">Мария</div>
<div class="abs" style="left:8.2px;top:663.5px;width:1289.0px;height:37.3px;background:#7a7a7a;border-top:1px solid #747474"></div>
<svg class="abs" style="left:15.8px;top:667.6px;width:30px;height:30px" viewBox="0 0 30 30"><g clip-path="url(#avc)"><g filter="url(#avb)"><rect width="30" height="30" fill="#888a8c"/><circle cx="7" cy="9" r="5" fill="#939596"/><circle cx="9" cy="24" r="6" fill="#95979a"/><path d="M9 14c0-6 3-9 7-9s6.500 3 6.500 8c0 4 1 7 2 9l-5 3-9-2c-1.500-3-1.500-6-1.500-9z" fill="#3e2e27"/><ellipse cx="16" cy="14.500" rx="4" ry="5" fill="#8b7268"/><ellipse cx="8" cy="22" rx="5" ry="4" fill="#959595"/><ellipse cx="21" cy="25" rx="6" ry="4" fill="#909090"/></g></g></svg>
<div class="abs" style="left:54.0px;top:666.6px;font-size:12.2px;line-height:16px;color:#17338b;white-space:nowrap;-webkit-text-stroke:.4px #17338b;letter-spacing:.45px;">Озерова</div>
<div class="abs" style="left:54.0px;top:682.9px;font-size:12.2px;line-height:16px;color:#17338b;white-space:nowrap;-webkit-text-stroke:.4px #17338b;letter-spacing:.45px;">Алиса</div>
<div class="abs" style="right:629.3px;top:674.2px;font-size:12.4px;line-height:16px;color:#17338b;white-space:nowrap;-webkit-text-stroke:.4px #17338b;letter-spacing:.3px;">66</div>
<div class="abs" style="right:495.8px;top:674.2px;font-size:12.4px;line-height:16px;color:#17338b;white-space:nowrap;-webkit-text-stroke:.4px #17338b;letter-spacing:.3px;">6</div>
<div class="abs" style="right:137.0px;top:674.2px;font-size:12.4px;line-height:16px;color:#17338b;white-space:nowrap;-webkit-text-stroke:.4px #17338b;letter-spacing:.3px;">50м</div>
<div class="abs" style="right:1052.3px;top:674.2px;font-size:12.4px;line-height:16px;color:#17338b;white-space:nowrap;-webkit-text-stroke:.4px #17338b;letter-spacing:.3px;">120</div>
<div class="abs" style="left:8.2px;top:700.8px;width:1289.0px;height:37.3px;background:#818181;border-top:1px solid #747474"></div>
<svg class="abs" style="left:15.8px;top:705.0px;width:30px;height:30px" viewBox="0 0 30 30"><g clip-path="url(#avc)"><g filter="url(#avb)"><rect width="30" height="30" fill="#1d2732"/><ellipse cx="16" cy="8.500" rx="12" ry="3.500" fill="#0a0b0d" transform="rotate(-8 16 8.500)"/><path d="M10 3c3-2 10-2 12 1l1 5H9z" fill="#0a0b0d"/><ellipse cx="13" cy="14.500" rx="4" ry="4.800" fill="#826a60"/><path d="M17 11c3 2 5 7 5 13l-6 1c1-4 0-9-1-12z" fill="#15100f"/><path d="M5 30c0-6 3-9 8-9s8 3 9 9z" fill="#0e1217"/><circle cx="12.500" cy="17.500" r=".9" fill="#7d2a2a"/></g></g></svg>
<div class="abs" style="left:54.0px;top:703.9px;font-size:12.2px;line-height:16px;color:#17338b;white-space:nowrap;-webkit-text-stroke:.4px #17338b;letter-spacing:.45px;">Грачева</div>
<div class="abs" style="left:54.0px;top:720.2px;font-size:12.2px;line-height:16px;color:#17338b;white-space:nowrap;-webkit-text-stroke:.4px #17338b;letter-spacing:.45px;">Евдокия</div>
<div class="abs" style="right:629.3px;top:711.5px;font-size:12.4px;line-height:16px;color:#17338b;white-space:nowrap;-webkit-text-stroke:.4px #17338b;letter-spacing:.3px;">14 361</div>
<div class="abs" style="right:315.0px;top:711.5px;font-size:12.4px;line-height:16px;color:#17338b;white-space:nowrap;-webkit-text-stroke:.4px #17338b;letter-spacing:.3px;">93ч 48м</div>
<div class="abs" style="right:137.0px;top:711.5px;font-size:12.4px;line-height:16px;color:#17338b;white-space:nowrap;-webkit-text-stroke:.4px #17338b;letter-spacing:.3px;">1ч 34м</div>
<div class="abs" style="left:8.2px;top:738.1px;width:1289.0px;height:37.9px;background:#7a7a7a;border-top:1px solid #747474"></div>
<svg class="abs" style="left:15.8px;top:742.5px;width:30px;height:30px" viewBox="0 0 30 30"><g clip-path="url(#avc)"><g filter="url(#avb)"><rect width="30" height="30" fill="#45420f"/><rect width="9" height="30" fill="#7b7a22"/><path d="M11 10c0-5 3-7 6-7s6 2.500 6 7.500c0 5 0 9-2 12l-8-2c-1.500-3-2-7-2-10.500z" fill="#7c6232"/><ellipse cx="16.500" cy="12" rx="3.600" ry="4.600" fill="#8c6b57"/><path d="M8 30c0-6 3-9 8-9s9 3 9 9z" fill="#0f0f10"/></g></g></svg>
<div class="abs" style="left:54.0px;top:741.2px;font-size:12.2px;line-height:16px;color:#17338b;white-space:nowrap;-webkit-text-stroke:.4px #17338b;letter-spacing:.45px;">Семенова</div>
<div class="abs" style="left:54.0px;top:757.5px;font-size:12.2px;line-height:16px;color:#17338b;white-space:nowrap;-webkit-text-stroke:.4px #17338b;letter-spacing:.45px;">Анастасия</div>
<div class="abs" style="right:629.3px;top:748.8px;font-size:12.4px;line-height:16px;color:#17338b;white-space:nowrap;-webkit-text-stroke:.4px #17338b;letter-spacing:.3px;">165</div>
<div class="abs" style="right:137.0px;top:748.8px;font-size:12.4px;line-height:16px;color:#17338b;white-space:nowrap;-webkit-text-stroke:.4px #17338b;letter-spacing:.3px;">5ч 32м</div>
<div class="abs" style="left:8.2px;top:776.0px;width:1289.0px;height:37.3px;background:#818181;border-top:1px solid #747474"></div>
<svg class="abs" style="left:15.8px;top:780.1px;width:30px;height:30px" viewBox="0 0 30 30"><g clip-path="url(#avc)"><g filter="url(#avb)"><rect width="30" height="30" fill="#5d574d"/><path d="M5 12c0-6 4-9 9-9s9 3 9 9c0 3-1 6-3 8l-12-1c-2-2-3-4-3-7z" fill="#8a6936"/><ellipse cx="13" cy="14" rx="5" ry="5.500" fill="#8f6b59" transform="rotate(-15 13 14)"/><path d="M10 30c1-5 5-9 10-10s10 3 10 6v4z" fill="#8f1a25"/><path d="M3 22l7-4 4 3-7 5z" fill="#8f6b59"/></g></g></svg>
<div class="abs" style="left:54.0px;top:779.1px;font-size:12.2px;line-height:16px;color:#17338b;white-space:nowrap;-webkit-text-stroke:.4px #17338b;letter-spacing:.45px;">Беспалова</div>
<div class="abs" style="left:54.0px;top:795.4px;font-size:12.2px;line-height:16px;color:#17338b;white-space:nowrap;-webkit-text-stroke:.4px #17338b;letter-spacing:.45px;">Виктория</div>
<div class="abs" style="right:315.0px;top:786.7px;font-size:12.4px;line-height:16px;color:#17338b;white-space:nowrap;-webkit-text-stroke:.4px #17338b;letter-spacing:.3px;">00м</div>
<div class="abs" style="right:137.0px;top:786.7px;font-size:12.4px;line-height:16px;color:#17338b;white-space:nowrap;-webkit-text-stroke:.4px #17338b;letter-spacing:.3px;">14м</div>
<div class="abs" style="left:8.2px;top:813.3px;width:1289.0px;height:37.6px;background:#7a7a7a;border-top:1px solid #747474"></div>
<svg class="abs" style="left:15.8px;top:817.6px;width:30px;height:30px" viewBox="0 0 30 30"><g clip-path="url(#avc)"><g filter="url(#avb)"><rect width="30" height="30" fill="#7d7d7d"/><rect y="19" width="30" height="11" fill="#6b6a68"/><path d="M13 6c2-3 6-2 7 1s2 8 3 11l-7 2-4-5z" fill="#6b5141"/><ellipse cx="15" cy="10" rx="2.800" ry="3.500" fill="#8a6d5f"/><path d="M6 21c3-4 9-5 13-3l5 3-2 5H8z" fill="#8c8c8c"/><ellipse cx="18" cy="23" rx="6" ry="3.500" fill="#2b2b2b"/></g></g></svg>
<div class="abs" style="left:54.0px;top:816.4px;font-size:12.2px;line-height:16px;color:#17338b;white-space:nowrap;-webkit-text-stroke:.4px #17338b;letter-spacing:.45px;">Тихомирова</div>
<div class="abs" style="left:54.0px;top:832.7px;font-size:12.2px;line-height:16px;color:#17338b;white-space:nowrap;-webkit-text-stroke:.4px #17338b;letter-spacing:.45px;">Вероника</div>
<div class="abs" style="right:629.3px;top:824.0px;font-size:12.4px;line-height:16px;color:#17338b;white-space:nowrap;-webkit-text-stroke:.4px #17338b;letter-spacing:.3px;">13 284</div>
<div class="abs" style="right:495.8px;top:824.0px;font-size:12.4px;line-height:16px;color:#17338b;white-space:nowrap;-webkit-text-stroke:.4px #17338b;letter-spacing:.3px;">3</div>
<div class="abs" style="right:315.0px;top:824.0px;font-size:12.4px;line-height:16px;color:#17338b;white-space:nowrap;-webkit-text-stroke:.4px #17338b;letter-spacing:.3px;">00м</div>
<div class="abs" style="right:137.0px;top:824.0px;font-size:12.4px;line-height:16px;color:#17338b;white-space:nowrap;-webkit-text-stroke:.4px #17338b;letter-spacing:.3px;">3ч 22м</div>
<div class="abs" style="left:8.2px;top:850.9px;width:1289.0px;height:37.4px;background:#818181;border-top:1px solid #747474"></div>
<svg class="abs" style="left:15.8px;top:855.1px;width:30px;height:30px" viewBox="0 0 30 30"><g clip-path="url(#avc)"><g filter="url(#avb)"><rect width="30" height="30" fill="#1d2732"/><ellipse cx="16" cy="8.500" rx="12" ry="3.500" fill="#0a0b0d" transform="rotate(-8 16 8.500)"/><path d="M10 3c3-2 10-2 12 1l1 5H9z" fill="#0a0b0d"/><ellipse cx="13" cy="14.500" rx="4" ry="4.800" fill="#826a60"/><path d="M17 11c3 2 5 7 5 13l-6 1c1-4 0-9-1-12z" fill="#15100f"/><path d="M5 30c0-6 3-9 8-9s8 3 9 9z" fill="#0e1217"/><circle cx="12.500" cy="17.500" r=".9" fill="#7d2a2a"/></g></g></svg>
<div class="abs" style="left:54.0px;top:854.0px;font-size:12.2px;line-height:16px;color:#17338b;white-space:nowrap;-webkit-text-stroke:.4px #17338b;letter-spacing:.45px;">Борисова</div>
<div class="abs" style="left:54.0px;top:870.3px;font-size:12.2px;line-height:16px;color:#17338b;white-space:nowrap;-webkit-text-stroke:.4px #17338b;letter-spacing:.45px;">Алиса</div>
<div class="abs" style="right:629.3px;top:861.6px;font-size:12.4px;line-height:16px;color:#17338b;white-space:nowrap;-webkit-text-stroke:.4px #17338b;letter-spacing:.3px;">39</div>
<div class="abs" style="left:8.2px;top:888.3px;width:1289.0px;height:38.1px;background:#7a7a7a;border-top:1px solid #747474"></div>
<svg class="abs" style="left:15.8px;top:892.8px;width:30px;height:30px" viewBox="0 0 30 30"><g clip-path="url(#avc)"><g filter="url(#avb)"><rect width="30" height="30" fill="#1b1617"/><path d="M0 0h14L3 16H0z" fill="#453b3b"/><ellipse cx="14" cy="28" rx="13" ry="8.500" fill="#0e0b0c"/><ellipse cx="14.500" cy="12" rx="4" ry="5.200" fill="#6e4e43"/><path d="M10.300 10.800c0-4.500 2-6.800 4.200-6.800s4.200 2.300 4.200 6.800c-1-2.500-2.500-3.500-4.200-3.500s-3.200 1-4.200 3.500z" fill="#120e0e"/><path d="M10.600 13.500c0 4.200 1.700 6.800 3.900 6.800s3.900-2.600 3.900-6.800c-1 1.800-2.300 2.500-3.900 2.500s-2.900-.700-3.900-2.500z" fill="#1c1413"/><path d="M20.500 10l2.500-1.500 1.500 5.500-2 4-2-1z" fill="#6e4e43"/></g></g></svg>
<div class="abs" style="left:54.0px;top:891.4px;font-size:12.2px;line-height:16px;color:#17338b;white-space:nowrap;-webkit-text-stroke:.4px #17338b;letter-spacing:.45px;">Игнатов</div>
<div class="abs" style="left:54.0px;top:907.7px;font-size:12.2px;line-height:16px;color:#17338b;white-space:nowrap;-webkit-text-stroke:.4px #17338b;letter-spacing:.45px;">Артём</div>
<div class="abs" style="right:629.3px;top:899.0px;font-size:12.4px;line-height:16px;color:#17338b;white-space:nowrap;-webkit-text-stroke:.4px #17338b;letter-spacing:.3px;">3 408</div>
<div class="abs" style="left:8.2px;top:926.4px;width:1289.0px;height:37.4px;background:#818181;border-top:1px solid #747474"></div>
<svg class="abs" style="left:15.8px;top:930.6px;width:30px;height:30px" viewBox="0 0 30 30"><g clip-path="url(#avc)"><g filter="url(#avb)"><rect width="30" height="30" fill="#8e8e8e"/><path d="M13 9c0-4 3-6 6-6s5.500 3 5.500 8c0 5-1 9-3 12l-6-3c-2-3-2.500-7-2.500-11z" fill="#2c211d"/><ellipse cx="16" cy="11.500" rx="3.300" ry="4.300" fill="#866a5d"/><path d="M8 30c0-7 3-12 8-12s8 4 9 12z" fill="#929292"/></g></g></svg>
<div class="abs" style="left:54.0px;top:929.5px;font-size:12.2px;line-height:16px;color:#17338b;white-space:nowrap;-webkit-text-stroke:.4px #17338b;letter-spacing:.45px;">Терехова</div>
<div class="abs" style="left:54.0px;top:945.8px;font-size:12.2px;line-height:16px;color:#17338b;white-space:nowrap;-webkit-text-stroke:.4px #17338b;letter-spacing:.45px;">Пелагея</div>
<div class="abs" style="right:629.3px;top:937.1px;font-size:12.4px;line-height:16px;color:#17338b;white-space:nowrap;-webkit-text-stroke:.4px #17338b;letter-spacing:.3px;">8 859</div>
<div class="abs" style="right:315.0px;top:937.1px;font-size:12.4px;line-height:16px;color:#17338b;white-space:nowrap;-webkit-text-stroke:.4px #17338b;letter-spacing:.3px;">1221ч 51м</div>
<div class="abs" style="left:8.2px;top:963.8px;width:1289.0px;height:4.2px;background:#7a7a7a;border-top:1px solid #747474"></div>
<div class="abs" style="left:0.0px;top:966.8px;width:1315.0px;height:1.2px;background:#f4f4f4"></div>
<div class="abs" style="left:1303.6px;top:0.0px;width:11.4px;height:968.0px;background:#7d7f82"></div>
<div class="abs" style="left:1306.0px;top:11.0px;width:6.9px;height:409.5px;background:#14307a"></div>
<svg class="abs" style="left:1306.9px;top:4.9px;width:5px;height:3px" viewBox="0 0 5 3"><path d="M0 3l2.500-3L5 3z" fill="#14307a"/></svg>
<svg class="abs" style="left:1307.0px;top:959.0px;width:5.200px;height:3.200px" viewBox="0 0 5 3"><path d="M0 0l2.500 3L5 0z" fill="#1a2f86"/></svg>
<div class="abs" style="left:1313.0px;top:0.0px;width:2.0px;height:966.8px;background:#8c8c86"></div>
<div class="abs" style="left:0;top:0;right:0;bottom:0;border-radius:13px 13px 0 0;box-shadow:inset .8px .8px 0 0 rgba(215,215,200,.55),inset -.5px 0 0 0 rgba(215,215,200,.4)"></div>
<!--/SLIDER-->
</div>

<!--PILLS-->
<div class="pill" style="left:17px;top:25px;width:43px;height:36px;border-radius:18px 0 0 18px"><svg class="abs" style="left:18.500px;top:12.500px;width:11px;height:11px" viewBox="0 0 11 11" fill="none" stroke="#f2f6fb" stroke-width="1.250" stroke-linecap="round"><path d="M1 1l9 9M10 1L1 10"/></svg></div>
<div class="pill" style="left:24px;top:71px;width:36px;height:28px;border-radius:14px 0 0 14px;background:#3181cb"><svg class="abs" style="left:11.500px;top:7.500px;width:13px;height:13px" viewBox="0 0 24 24" fill="none" stroke="#eef3fa" stroke-width="2.200" stroke-linecap="round" stroke-linejoin="round"><path d="M10 13a5 5 0 0 0 7.540.540l3-3a5 5 0 0 0-7.070-7.070l-1.720 1.710"/><path d="M14 11a5 5 0 0 0-7.540-.540l-3 3a5 5 0 0 0 7.070 7.070l1.710-1.710"/></svg></div>
<div class="pill" style="left:24px;top:109px;width:36px;height:28px;border-radius:14px 0 0 14px;background:#3181cb"><svg class="abs" style="left:11px;top:7px;width:14px;height:14px" viewBox="0 0 24 24" fill="none" stroke="#eef3fa" stroke-width="2" stroke-linecap="round" stroke-linejoin="round"><path d="M21 13v6a2 2 0 0 1-2 2H5a2 2 0 0 1-2-2V5a2 2 0 0 1 2-2h6"/><path d="M15 3h6v6"/><path d="M10 14L21 3"/></svg></div>
<!--/PILLS-->

<div id="modal" class="abs">
<div id="lp" class="abs">
<!--LEFTPANEL-->
<div class="abs med" style="left:8.7px;top:16.6px;font-size:17.3px;line-height:20px;color:#15171f;white-space:nowrap">Столбцы-индикаторы</div>
<div class="abs" style="left:253.5px;top:11.5px;width:122.8px;height:29px;border-radius:4px;background:#e7e7e9"><svg class="abs" style="left:16.700px;top:6.500px;width:17px;height:17px" viewBox="0 0 24 24" fill="none" stroke="#30343e" stroke-width="1.800" stroke-linecap="round"><path d="M4 12h16"/><path d="M12 4v16"/></svg><div class="abs med" style="left:38.5px;top:5.5px;font-size:15.2px;line-height:18px;color:#1f2430;white-space:nowrap">Добавить</div></div>
<div class="it" style="top:51.2px"><div class="ic"><svg viewBox="0 0 24 24"><path d="M16 10h2"/><path d="M16 14h2"/><path d="M6.17 15a3 3 0 0 1 5.66 0"/><circle cx="9" cy="11" r="2"/><rect x="2" y="5" width="20" height="14" rx="2"/></svg></div><div class="t" style="letter-spacing:0.342px;">Лиды</div><div class="s" style="letter-spacing:0.295px;">Новые</div></div>
<div class="it sel" style="top:107.0px"><div class="ic"><svg viewBox="0 0 24 24"><path d="m11 17 2 2a1 1 0 1 0 3-3"/><path d="m14 14 2.5 2.5a1 1 0 1 0 3-3l-3.88-3.88a3 3 0 0 0-4.24 0l-.88.88a1 1 0 1 1-3-3l2.81-2.81a5.79 5.79 0 0 1 7.06-.87l.47.28a2 2 0 0 0 1.42.25L21 4"/><path d="m21 3 1 11h-2"/><path d="M3 3 2 14l6.5 6.5a1 1 0 1 0 3-3"/><path d="M3 4h8"/></svg></div><div class="t" style="letter-spacing:-0.073px;">Сделки</div><div class="s" style="letter-spacing:0.135px;">Новые (сумма)</div></div>
<div class="it" style="top:163.2px"><div class="ic"><svg viewBox="0 0 24 24"><path d="M4 2v20l2-1 2 1 2-1 2 1 2-1 2 1 2-1 2 1V2l-2 1-2-1-2 1-2-1-2 1-2-1-2 1Z"/><path d="M8 15h5"/><path d="M8 11h5a2 2 0 1 0 0-4h-3v10"/></svg></div><div class="t" style="letter-spacing:-0.185px;">Счета (старые)</div><div class="s" style="letter-spacing:-0.049px;">Выставленные</div></div>
<div class="it" style="top:219.7px"><div class="ic"><svg viewBox="0 0 24 24"><rect x="3" y="5" width="6" height="6" rx="1"/><path d="m3 17 2 2 4-4"/><path d="M13 6h8"/><path d="M13 12h8"/><path d="M13 18h8"/></svg></div><div class="t" style="letter-spacing:-0.100px;">Задачи</div><div class="s" style="letter-spacing:0.146px;">Завершенные</div></div>
<div class="it" style="top:276.2px"><div class="ic"><svg viewBox="0 0 24 24"><rect x="3" y="5" width="6" height="6" rx="1"/><path d="m3 17 2 2 4-4"/><path d="M13 6h8"/><path d="M13 12h8"/><path d="M13 18h8"/></svg></div><div class="t" style="letter-spacing:-0.100px;">Задачи</div><div class="s" style="letter-spacing:0.271px;">На контроле</div></div>
<div class="it" style="top:332.8px"><div class="ic"><svg viewBox="0 0 24 24"><path d="M10 2h4"/><path d="M12 14v-4"/><path d="M4 13a8 8 0 0 1 8-7 8 8 0 1 1-5.3 14L4 17.6"/><path d="M9 17H4v5"/></svg></div><div class="t" style="letter-spacing:0.083px;">Списанное время</div><div class="s" style="letter-spacing:-0.092px;">Сумма</div></div>
<div class="it" style="top:388.8px"><div class="ic"><svg viewBox="0 0 24 24"><path d="M22 16.92v3a2 2 0 0 1-2.18 2 19.79 19.79 0 0 1-8.63-3.07 19.5 19.5 0 0 1-6-6 19.79 19.79 0 0 1-3.07-8.67A2 2 0 0 1 4.11 2h3a2 2 0 0 1 2 1.72 12.84 12.84 0 0 0 .7 2.81 2 2 0 0 1-.45 2.11L8.09 9.91a16 16 0 0 0 6 6l1.27-1.27a2 2 0 0 1 2.11-.45 12.84 12.84 0 0 0 2.81.7A2 2 0 0 1 22 16.92z"/><path d="M14.05 2a9 9 0 0 1 8 7.94"/><path d="M14.05 6A5 5 0 0 1 18 10"/></svg></div><div class="t" style="letter-spacing:0.405px;">Звонки</div><div class="s" style="letter-spacing:0.123px;">Исходящие (от 30 сек)</div></div>
<div class="it" style="top:445.3px"><div class="ic"><svg viewBox="0 0 24 24"><path d="M22 12h-2.48a2 2 0 0 0-1.93 1.46l-2.35 8.36a.25.25 0 0 1-.48 0L9.24 2.18a.25.25 0 0 0-.48 0l-2.35 8.36A2 2 0 0 1 4.49 12H2"/></svg></div><div class="t" style="letter-spacing:-0.077px;">Дела</div><div class="s" style="letter-spacing:0.184px;">Ожидающие TODO</div></div>
<div class="it" style="top:502.1px"><div class="ic"><svg viewBox="0 0 24 24"><path d="M4 2v20l2-1 2 1 2-1 2 1 2-1 2 1 2-1 2 1V2l-2 1-2-1-2 1-2-1-2 1-2-1-2 1Z"/><path d="M8 15h5"/><path d="M8 11h5a2 2 0 1 0 0-4h-3v10"/></svg></div><div class="t" style="letter-spacing:-0.181px;">Счета</div><div class="s" style="letter-spacing:-0.142px;">Счёт</div></div>
<div class="it" style="top:558.3px;height:39.3px"><div class="ic" style="top:9.300px"><svg viewBox="0 0 24 24"><path d="M4 22h16a2 2 0 0 0 2-2V4a2 2 0 0 0-2-2H8a2 2 0 0 0-2 2v16a2 2 0 0 1-2 2Zm0 0a2 2 0 0 1-2-2v-9c0-1.1.9-2 2-2h2"/><path d="M18 14h-8"/><path d="M15 18h-5"/><path d="M10 6h8v4h-8V6Z"/></svg></div><div class="t" style="height:15.7px;overflow:hidden;letter-spacing:0.273px;">Коммерческие Предложения</div></div>
<div class="it" style="top:605.4px"><div class="ic"><svg viewBox="0 0 24 24"><path d="M3 6.600h13"/><path d="M3 12.800h13"/><path d="M3 19h13"/><path d="M21.500 6.600h.01"/><path d="M21.500 12.800h.01"/><path d="M21.500 19h.01"/></svg></div><div class="t" style="letter-spacing:0.191px;">Списки</div><div class="s" style="height:13.4px;overflow:hidden;letter-spacing:0.062px;">Встречи</div></div>
<!--/LEFTPANEL-->
</div>
<div id="hd" class="abs">
<!--HEADER-->
<div class="abs med" style="left:6.9px;top:15.6px;font-size:15px;line-height:19px;color:#1f2430;white-space:nowrap;letter-spacing:0.060px;">Профиль админа:</div>
<div class="abs" style="left:150.2px;top:8.8px;width:396px;height:32.8px;border-radius:7px;background:#fff;box-shadow:0 0 0 1px rgba(226,232,240,.6)"><div class="abs" style="left:7.6px;top:8.5px;font-size:14.9px;line-height:19px;color:#1f2430;white-space:nowrap;letter-spacing:-0.018px;">Производительность</div><svg class="abs" style="left:349.6px;top:12.1px;width:10px;height:10px" viewBox="0 0 10 10" fill="none" stroke="#111" stroke-width="1.7" stroke-linecap="round"><path d="M1.2 1.2l7.6 7.6M8.8 1.2 1.2 8.8"/></svg><div class="chev" style="left:374.8px;top:13.6px"><svg viewBox="0 0 12 8"><path d="M1.5 1.5 6 6l4.5-4.5"/></svg></div></div>
<div class="abs" style="left:554.8px;top:9.5px;width:179.2px;height:32px;border:1px solid #8fb0f6;border-radius:7px;background:#fff"><div class="abs" style="left:7.9px;top:8.0px;width:14.4px;height:14.4px;border-radius:3px;background:#2563eb"><svg style="width:14.4px;height:14.4px" viewBox="0 0 16 16" fill="none" stroke="#fff" stroke-width="1.8" stroke-linecap="round" stroke-linejoin="round"><path d="M3.6 8.4l2.9 2.8 5.8-6"/></svg></div><div class="abs" style="left:26.4px;top:7.3px;font-size:13.3px;line-height:17px;color:#1f2430;white-space:nowrap;letter-spacing:0.044px;">Автозагрузка профиля</div></div>
<div class="abs" style="left:743.5px;top:9.5px;width:36.8px;height:31.5px;border-radius:7px;background:#fff;box-shadow:0 1px 2px rgba(15,23,42,.06)"><svg class="abs" style="left:7.3px;top:4.4px;width:22px;height:22px" viewBox="0 0 24 24" fill="none" stroke="#0b0b12" stroke-width="2" stroke-linecap="round" stroke-linejoin="round"><path d="M15.2 3a2 2 0 0 1 1.4.6l3.8 3.8a2 2 0 0 1 .6 1.4V19a2 2 0 0 1-2 2H5a2 2 0 0 1-2-2V5a2 2 0 0 1 2-2z"/><path d="M17 21v-7a1 1 0 0 0-1-1H8a1 1 0 0 0-1 1v7"/><path d="M7 3v4a1 1 0 0 0 1 1h7"/></svg></div>
<!--/HEADER-->
</div>
<!--FORM-->
<div class="abs med" style="left:401.9px;top:62.5px;font-size:16.7px;line-height:21px;color:#15171f;white-space:nowrap;letter-spacing:0.114px;">Редактор</div>
<div class="abs" style="left:479.4px;top:62.1px;font-size:12.2px;line-height:15px;color:#9ca3af;white-space:nowrap;letter-spacing:0.036px;">Сделки</div>
<div class="abs" style="left:405.5px;top:99.3px;font-size:15px;line-height:19px;color:#1f2430;white-space:nowrap;letter-spacing:0.119px;">Заголовок</div>
<div class="abs" style="left:664.0px;top:99.3px;font-size:15px;line-height:19px;color:#1f2430;white-space:nowrap;letter-spacing:0.159px;">Подзаголовок</div>
<div class="abs" style="left:922.0px;top:99.3px;font-size:15px;line-height:19px;color:#1f2430;white-space:nowrap;letter-spacing:-0.102px;">Описание</div>
<div class="abs" style="left:406.0px;top:119.3px;width:250.0px;height:33.0px;border:1px solid #e2e8f0;border-radius:8px;background:#fff;box-shadow:0 1px 2px rgba(15,23,42,.04)"><div class="abs" style="left:10.5px;top:9.1px;font-size:12.8px;line-height:18px;color:#1f2430;white-space:nowrap;letter-spacing:-0.071px;">Сделки</div></div>
<div class="abs" style="left:664.0px;top:119.3px;width:250.0px;height:33.0px;border:1px solid #e2e8f0;border-radius:8px;background:#fff;box-shadow:0 1px 2px rgba(15,23,42,.04)"><div class="abs" style="left:10.5px;top:9.1px;font-size:12.8px;line-height:18px;color:#1f2430;white-space:nowrap;letter-spacing:0.043px;">Новые (сумма)</div></div>
<div class="abs" style="left:922.0px;top:119.3px;width:250.0px;height:33.0px;border:1px solid #e2e8f0;border-radius:8px;background:#fff;box-shadow:0 1px 2px rgba(15,23,42,.04)"><div class="abs" style="left:10.5px;top:9.1px;font-size:12.8px;line-height:18px;color:#9ca3af;white-space:nowrap;letter-spacing:0.062px;">Подсказка (не обязательно)</div></div>
<div class="abs" style="left:405.5px;top:155.1px;font-size:15px;line-height:19px;color:#1f2430;white-space:nowrap;letter-spacing:-0.191px;">Поле даты*</div>
<div class="abs" style="left:793.5px;top:155.1px;font-size:15px;line-height:19px;color:#1f2430;white-space:nowrap;letter-spacing:-0.029px;">Поле сотрудника*</div>
<div class="abs" style="left:406.0px;top:176.4px;width:379.0px;height:33.8px;border:1px solid #e2e8f0;border-radius:8px;background:#fff;box-shadow:0 1px 2px rgba(15,23,42,0.05)"><div class="abs" style="left:6.5px;top:6.2px;font-size:14.6px;line-height:20px;color:#1f2430;white-space:nowrap;letter-spacing:0.004px;">Дата создания</div><div class="chev" style="right:9.5px;top:11.9px"><svg viewBox="0 0 12 8"><path d="M1.5 1.5 6 6l4.5-4.5"/></svg></div></div>
<div class="abs" style="left:793.0px;top:176.4px;width:379.0px;height:33.8px;border:1px solid #e2e8f0;border-radius:8px;background:#fff;box-shadow:0 1px 2px rgba(15,23,42,0.05)"><div class="abs" style="left:6.5px;top:6.2px;font-size:14.6px;line-height:20px;color:#1f2430;white-space:nowrap;letter-spacing:0.041px;">Ответственный</div><div class="chev" style="right:9.5px;top:11.9px"><svg viewBox="0 0 12 8"><path d="M1.5 1.5 6 6l4.5-4.5"/></svg></div></div>
<div class="abs" style="left:405.5px;top:212.9px;font-size:15px;line-height:19px;color:#1f2430;white-space:nowrap;letter-spacing:0.081px;">Тип отображения*</div>
<div class="abs" style="left:793.5px;top:212.9px;font-size:15px;line-height:19px;color:#1f2430;white-space:nowrap;letter-spacing:0.060px;">Поле отображения*</div>
<div class="abs" style="left:406.0px;top:234.6px;width:379.0px;height:34.6px;border:1px solid #e2e8f0;border-radius:8px;background:#fff;box-shadow:0 1px 2px rgba(15,23,42,0.05)"><div class="abs" style="left:6.5px;top:6.2px;font-size:14.6px;line-height:20px;color:#1f2430;white-space:nowrap;letter-spacing:0.312px;">Подсчет суммы по полю</div><div class="chev" style="right:9.5px;top:12.3px"><svg viewBox="0 0 12 8"><path d="M1.5 1.5 6 6l4.5-4.5"/></svg></div></div>
<div class="abs" style="left:793.0px;top:234.6px;width:379.0px;height:34.6px;border:1px solid #e2e8f0;border-radius:8px;background:#fff;box-shadow:0 1px 2px rgba(15,23,42,0.05)"><div class="abs" style="left:6.5px;top:6.2px;font-size:14.6px;line-height:20px;color:#1f2430;white-space:nowrap;letter-spacing:-0.075px;">Сумма</div><div class="chev" style="right:9.5px;top:12.3px"><svg viewBox="0 0 12 8"><path d="M1.5 1.5 6 6l4.5-4.5"/></svg></div></div>
<div class="abs med" style="left:406.0px;top:272.4px;font-size:14.6px;line-height:18px;color:#15171f;white-space:nowrap;letter-spacing:0.459px;">Фильтр</div>
<div class="abs med" style="left:1077.8px;top:271.9px;font-size:13.3px;line-height:17px;color:#2563eb;white-space:nowrap;letter-spacing:0.143px;">Добавить поле</div>
<div class="abs" style="left:406.0px;top:300.6px;width:295.0px;height:33.7px;border:1px solid #e2e8f0;border-radius:8px;background:#fff;box-shadow:0 1px 2px rgba(15,23,42,0.05)"><div class="abs" style="left:6.5px;top:6.2px;font-size:14.6px;line-height:20px;color:#64748b;white-space:nowrap;letter-spacing:0.072px;">Выберите поле</div><div class="chev" style="right:9.5px;top:11.8px"><svg viewBox="0 0 12 8"><path d="M1.5 1.5 6 6l4.5-4.5"/></svg></div></div>
<div class="abs" style="left:709.0px;top:300.6px;width:176.4px;height:33.7px;border:1px solid #edf0f4;border-radius:8px;background:#fff;box-shadow:0 1px 2px rgba(15,23,42,0.02)"><div class="abs" style="left:6.5px;top:6.2px;font-size:14.6px;line-height:20px;color:#9ca3af;white-space:nowrap;letter-spacing:0.097px;">Равно</div><div class="chev" style="right:9.5px;top:11.8px"><svg viewBox="0 0 12 8"><path style="stroke:#8a8f98" d="M1.5 1.5 6 6l4.5-4.5"/></svg></div></div>
<div class="abs" style="left:894.0px;top:301.5px;width:236.2px;height:32.1px;border:1px solid #f1f4f8;border-radius:8px;background:#f8fafc;box-shadow:0 1px 2px rgba(15,23,42,.04)"><div class="abs" style="left:10.5px;top:7.9px;font-size:12.8px;line-height:18px;color:#cbd2dc;white-space:nowrap;letter-spacing:0.097px;">Введите значение</div></div>
<svg class="abs" style="left:1147.5px;top:308.9px;width:16px;height:16px" viewBox="0 0 24 24" fill="none" stroke="#0b0b12" stroke-width="2.3" stroke-linecap="round" stroke-linejoin="round"><path d="M3 6h18"/><path d="M19 6v14c0 1-1 2-2 2H7c-1 0-2-1-2-2V6"/><path d="M8 6V4c0-1 1-2 2-2h4c1 0 2 1 2 2v2"/><line x1="10" x2="10" y1="11" y2="17"/><line x1="14" x2="14" y1="11" y2="17"/></svg>
<div class="abs" style="left:697.7px;top:616px;width:84px;height:34px;border-radius:7px;background:#2563eb;box-shadow:0 1px 2px rgba(15,23,42,.15)"><svg class="abs" style="left:11.2px;top:9.0px;width:18px;height:18px" viewBox="0 0 24 24" fill="none" stroke="#fff" stroke-width="2" stroke-linecap="round"><circle cx="11" cy="11" r="8"/><path d="m21 21-4.3-4.3"/></svg><div class="abs" style="left:33.7px;top:9.9px;font-size:12.7px;line-height:16px;color:#fff;white-space:nowrap;font-weight:700;letter-spacing:0.217px;">Поиск</div></div>
<div class="abs" style="left:796.5px;top:616px;width:83.5px;height:34px;border-radius:7px;background:#fff;border:1px solid #e2e8f0;box-shadow:0 1px 2px rgba(15,23,42,.05)"><div class="abs" style="left:15.0px;top:8.7px;font-size:13.2px;line-height:16px;color:#1f2430;white-space:nowrap;letter-spacing:0.180px;">Закрыть</div></div>
<!--/FORM-->
</div>
</body>
</html>
